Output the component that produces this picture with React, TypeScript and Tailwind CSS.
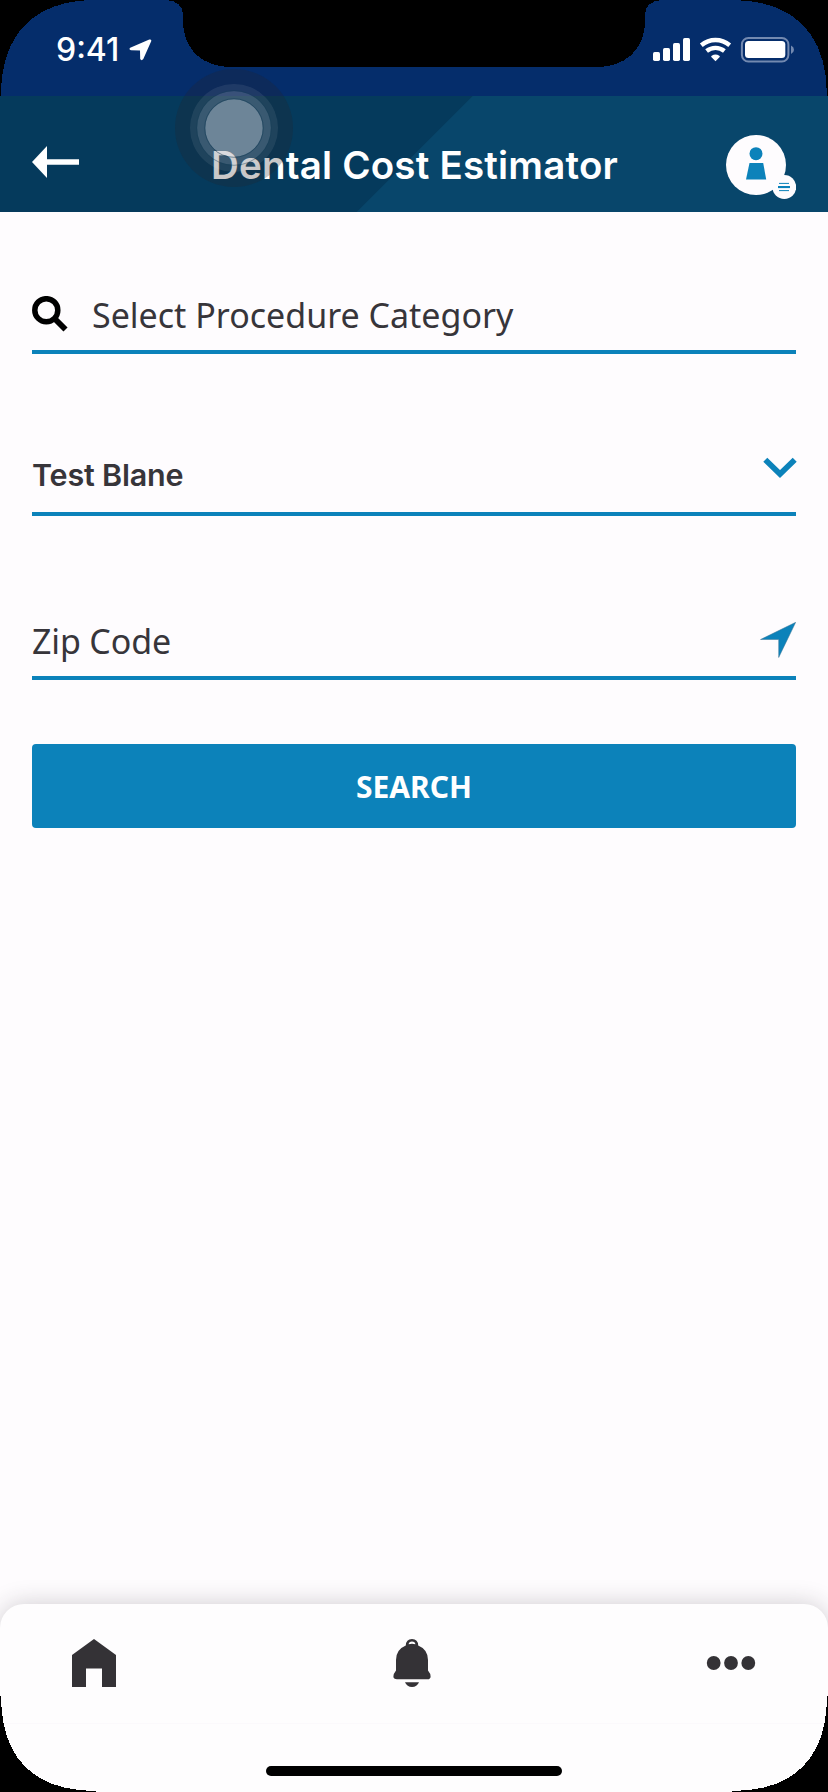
import React from "react";

function StatusBar() {
  return (
    <div className="flex h-24 items-start justify-between bg-[#052d6b] pt-[37px] pr-[34px] pl-14 text-white">
      <div className="flex">
        <span className="w-[73px] text-[32px] leading-[26px] font-[550] whitespace-nowrap">9:41</span>
        <svg className="mt-0.5" width="23" height="22" viewBox="0 0 23 22">
          <path d="M1.200 8.700 20.300.5Q22.800 .1 22.200 2.300L14.300 20Q12.500 22.300 11.200 20L11 11.500 2 11.300Q-.5 10.300 1.200 8.700Z" fill="currentColor" />
        </svg>
      </div>
      <svg width="142" height="26" viewBox="0 0 142 26">
        <g fill="currentColor">
          <rect x="1" y="15" width="7" height="9" rx="1.700" />
          <rect x="11" y="11" width="7" height="13" rx="1.700" />
          <rect x="21" y="6" width="7" height="18" rx="1.700" />
          <rect x="31" y="1" width="7" height="23" rx="1.700" />
          <path d="M63.500 24.200 59.300 19.900Q58.900 19.200 59.700 18.800Q63.500 16.300 67.300 18.800Q68.100 19.200 67.700 19.900Z" />
        </g>
        <g fill="none" stroke="currentColor" strokeWidth="4.400">
          <path d="M49.300 8.200Q55.500 3 63.500 3T77.700 8.200" />
          <path d="M54.600 14Q58.500 10.900 63.500 10.900T72.400 14" />
        </g>
        <rect x="89.900" y="1" width="46.500" height="23.500" rx="6.500" fill="none" stroke="#7389b0" strokeWidth="2" />
        <rect x="93" y="4" width="40.300" height="17" rx="3.500" fill="currentColor" />
        <path d="M139 8.500Q142 10 142 12.800T139 17Z" fill="#7389b0" />
      </svg>
    </div>
  );
}

function Header() {
  return (
    <header className="grid h-[116px] grid-cols-[1fr_auto_1fr] items-start bg-[linear-gradient(135deg,#053a5c_334px,#08466b_334.600px)] px-8 text-white">
      <svg className="mt-[50px]" width="47" height="33" viewBox="0 0 47 33">
        <path d="M0 16 15 0V13.200H47V18.700H15V32Z" fill="currentColor" />
      </svg>
      <h1 className="mt-[45px] pl-px text-[38.500px] leading-[48px] font-semibold tracking-[0.200px] whitespace-nowrap">Dental Cost Estimator</h1>
      <svg className="mt-[39px] justify-self-end" width="70" height="64" viewBox="0 0 70 64">
        <circle cx="30" cy="30" r="30" fill="#fefcfe" />
        <circle cx="58.300" cy="52" r="11.900" fill="#fefcfe" />
        <g fill="#0c82ba">
          <circle cx="30" cy="18.700" r="6.500" />
          <path d="M23.500 28H37.200L40.200 44.600H20Z" />
          <rect x="53" y="47.900" width="10" height="1" />
          <rect x="52" y="51" width="12" height="2.100" />
          <rect x="53" y="55.100" width="10" height="1" />
        </g>
      </svg>
    </header>
  );
}

function SearchForm() {
  return (
    <main className="flex flex-1 flex-col px-8 font-['Noto_Sans',sans-serif] text-[#37353a]">
      <div className="flex h-[142px] items-start border-b-4 border-[#0c82ba]">
        <svg className="mt-[84px]" width="36" height="36" viewBox="0 0 36 36">
          <circle cx="14.300" cy="14.200" r="11.500" fill="none" stroke="#000" strokeWidth="5.500" />
          <path d="M22.500 22.500 33.500 33.500" stroke="#000" strokeWidth="5.800" />
        </svg>
        <span className="mt-[79px] ml-6 text-[34px] leading-[48px] whitespace-nowrap">Select Procedure Category</span>
      </div>
      <div className="flex h-[162px] items-start justify-between border-b-4 border-[#0c82ba]">
        <span className="mt-[97px] font-['Inter',sans-serif] text-[30.500px] leading-[48px] font-semibold tracking-[-0.200px] whitespace-nowrap">Test Blane</span>
        <svg className="mt-[103px] -mr-px" width="34" height="22" viewBox="0 0 34 22">
          <path d="M2.300 2.700 17 17.100 31.700 2.700" fill="none" stroke="#0c82ba" strokeWidth="5.700" />
        </svg>
      </div>
      <div className="flex h-[164px] items-start justify-between border-b-4 border-[#0c82ba]">
        <span className="mt-[101px] text-[34px] leading-[48px] tracking-[-0.150px] whitespace-nowrap">Zip Code</span>
        <svg className="mt-[106px]" width="36" height="36" viewBox="0 0 36 36">
          <path d="M35.700.3.5 17.500H18.700V35.500Z" fill="#0c82ba" stroke="#3d7595" strokeWidth=".5" />
        </svg>
      </div>
      <button className="mt-16 flex h-[84px] items-center justify-center rounded bg-[#0c82ba] text-[30px] font-bold text-white">SEARCH</button>
    </main>
  );
}

function BottomNav() {
  return (
    <nav className="flex h-[188px] flex-col items-center rounded-t-3xl bg-[#fefdfe] shadow-[0_0_24px_rgba(40,35,45,0.220)]">
      <div className="flex h-[120px] w-full justify-between border-b border-[#fbf9fc] px-[72px] pt-[35px] text-[#343236]">
        <svg width="44" height="48" viewBox="0 0 44 48">
          <path d="M22 0 44 16V48H30V29.500H14V48H0V16Z" fill="currentColor" />
        </svg>
        <svg className="ml-0.5" width="38" height="49" viewBox="0 0 38 49">
          <path d="M12.800 6.500Q13 0 19 0T25.200 6.500Q35 10.500 35 21V31.500Q37.600 34.500 37.600 37.500T34 40.300H4Q.4 40.300.4 37.500T3 31.500V21Q3 10.500 12.800 6.500ZM15.600 5.300Q19 4.300 22.400 5.300Q22 2.600 19 2.600T15.600 5.300Z" fill="currentColor" fillRule="evenodd" />
          <path d="M12 43.200H26Q24 48 19 48T12 43.200Z" fill="currentColor" />
        </svg>
        <svg className="mt-[17px]" width="50" height="14" viewBox="0 0 50 14">
          <g fill="currentColor">
            <circle cx="7.700" cy="7" r="6.900" />
            <circle cx="25" cy="7" r="6.900" />
            <circle cx="42.300" cy="7" r="6.900" />
          </g>
        </svg>
      </div>
      <div className="mt-[42px] h-2.5 w-[296px] rounded-full bg-black" />
    </nav>
  );
}

function AssistiveTouch() {
  return (
    <svg className="absolute top-[68px] left-[174px]" width="120" height="120" viewBox="0 0 120 120">
      <circle cx="60" cy="60" r="59" fill="#282428" fillOpacity=".25" />
      <circle cx="60" cy="60" r="44" fill="#fff" fillOpacity=".08" />
      <circle cx="60" cy="60" r="37" fill="#e8f0ff" fillOpacity=".13" />
      <circle cx="60" cy="60" r="28.700" fill="#f4f8ff" fillOpacity=".28" />
      <circle cx="60" cy="60" r="29.300" fill="none" stroke="#123b56" strokeOpacity=".5" />
      <circle cx="60" cy="60" r="37.300" fill="none" stroke="#123b56" strokeOpacity=".4" />
    </svg>
  );
}

function DeviceBezel() {
  return (
    <svg className="pointer-events-none absolute inset-0" width="828" height="1792" viewBox="0 0 828 1792" shapeRendering="crispEdges">
      <path d="M0 0H96C34 0 1 34 1 96H0Z" />
      <path d="M828 0H732C794 0 827 34 827 96H828Z" />
      <path d="M0 1792V1696H1C1 1758 34 1791 96 1791V1792Z" />
      <path d="M828 1792V1696H827C827 1758 794 1791 732 1791V1792Z" />
      <path d="M166 0C178 1 182 6 182.700 13L183.500 28C186 52 205 66 228 67H600C623 66 642 52 644.500 28L645.300 13C646 6 650 1 662 0Z" />
    </svg>
  );
}

export default function App() {
  return (
    <div className="relative flex h-[1792px] w-[828px] flex-col overflow-hidden bg-[#fefcfe] font-['Inter',sans-serif]">
      <StatusBar />
      <Header />
      <SearchForm />
      <BottomNav />
      <AssistiveTouch />
      <DeviceBezel />
    </div>
  );
}
